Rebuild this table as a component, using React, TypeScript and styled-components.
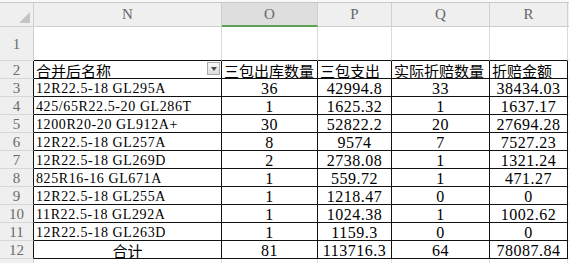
import styled, { createGlobalStyle } from "styled-components";

const GlobalStyle = createGlobalStyle`
  html, body {
    margin: 0;
    padding: 0;
    background: #ffffff;
    overflow: hidden;
  }
  body {
    font-family: "Liberation Serif", "Noto Sans CJK SC", serif;
    color: #000;
  }
`;

const TopStrip = styled.div`
  height: 2px;
  background: #f8f8f8;
  border-bottom: 1px solid #c8c8c8;
`;

const Grid = styled.div`
  display: grid;
  grid-template-columns: 34px 188px 96px 74px 98px 78px 10px;
  grid-template-rows: 24px 34px repeat(12, 18px);
`;

const Corner = styled.div`
  position: relative;
  background: #efefef;
  border-right: 1px solid #cfcfcf;
  border-bottom: 1px solid #cfcfcf;

  &::after {
    content: "";
    position: absolute;
    right: 3px;
    bottom: 3px;
    width: 11px;
    height: 11px;
    background: #c4c4c4;
    clip-path: polygon(100% 0, 100% 100%, 0 100%);
  }
`;

const ColHead = styled.div<{ $active?: boolean }>`
  display: flex;
  align-items: center;
  justify-content: center;
  box-sizing: border-box;
  background: ${(p) => (p.$active ? "#dedede" : "#efefef")};
  border-right: 1px solid #cfcfcf;
  border-bottom: ${(p) => (p.$active ? "2px solid #5d9f55" : "1px solid #cfcfcf")};
  color: #666;
  font-size: 15px;
  padding-top: ${(p) => (p.$active ? "1px" : "0")};
`;

const RowHead = styled.div<{ $dark?: boolean }>`
  display: flex;
  align-items: center;
  justify-content: center;
  box-sizing: border-box;
  background: #efefef;
  border-right: 1px solid ${(p) => (p.$dark ? "#111" : "#cfcfcf")};
  border-bottom: 1px solid #d6d6d6;
  color: #6a6a6a;
  font-size: 15px;
  padding-top: 2px;
`;

type Kind = "name" | "num" | "title" | "blank";

const Cell = styled.div<{
  $kind: Kind;
  $center?: boolean;
  $right: "dark" | "light";
  $bottom: "dark" | "light";
}>`
  position: relative;
  display: flex;
  align-items: center;
  justify-content: ${(p) => (p.$center ? "center" : "flex-start")};
  box-sizing: border-box;
  overflow: hidden;
  white-space: nowrap;
  padding-left: ${(p) => (p.$center ? "0" : "2px")};
  border-right: 1px solid ${(p) => (p.$right === "dark" ? "#111" : "#dadada")};
  border-bottom: 1px solid ${(p) => (p.$bottom === "dark" ? "#111" : "#dadada")};
  font-family: ${(p) =>
    p.$kind === "title"
      ? '"Noto Sans CJK SC", sans-serif'
      : '"Liberation Serif", "Noto Sans CJK SC", serif'};
  font-size: ${(p) =>
    p.$kind === "num" ? "16px" : p.$kind === "title" ? "15px" : "14px"};
  letter-spacing: ${(p) =>
    p.$kind === "num" ? "0.5px" : p.$kind === "name" ? "0.6px" : "0"};
  line-height: 17px;
  padding-top: 1px;
`;

const FilterButton = styled.span`
  position: absolute;
  right: 1px;
  top: 1px;
  width: 13px;
  height: 13px;
  box-sizing: border-box;
  border: 1px solid #a9a9a9;
  background: linear-gradient(#f7f7f7, #dcdcdc);
  display: flex;
  align-items: center;
  justify-content: center;

  &::after {
    content: "";
    border-left: 3px solid transparent;
    border-right: 3px solid transparent;
    border-top: 4px solid #4a4a4a;
    margin-top: 1px;
  }
`;

const columns = ["N", "O", "P", "Q", "R"];
const titles = ["合并后名称", "三包出库数量", "三包支出", "实际折赔数量", "折赔金额"];

const rows: string[][] = [
  ["12R22.5-18 GL295A", "36", "42994.8", "33", "38434.03"],
  ["425/65R22.5-20 GL286T", "1", "1625.32", "1", "1637.17"],
  ["1200R20-20 GL912A+", "30", "52822.2", "20", "27694.28"],
  ["12R22.5-18 GL257A", "8", "9574", "7", "7527.23"],
  ["12R22.5-18 GL269D", "2", "2738.08", "1", "1321.24"],
  ["825R16-16 GL671A", "1", "559.72", "1", "471.27"],
  ["12R22.5-18 GL255A", "1", "1218.47", "0", "0"],
  ["11R22.5-18 GL292A", "1", "1024.38", "1", "1002.62"],
  ["12R22.5-18 GL263D", "1", "1159.3", "0", "0"],
  ["合计", "81", "113716.3", "64", "78087.84"],
];

export default function App() {
  return (
    <>
      <GlobalStyle />
      <TopStrip />
      <Grid>
        <Corner />
        {columns.map((c) => (
          <ColHead key={c} $active={c === "O"}>
            {c}
          </ColHead>
        ))}
        <ColHead />

        <RowHead>1</RowHead>
        {columns.map((c) => (
          <Cell key={c} $kind="blank" $right="light" $bottom="dark" />
        ))}
        <Cell $kind="blank" $right="light" $bottom="light" />

        <RowHead $dark>2</RowHead>
        {titles.map((t, i) => (
          <Cell key={t} $kind="title" $right="dark" $bottom="dark">
            {t}
            {i === 0 && <FilterButton />}
          </Cell>
        ))}
        <Cell $kind="blank" $right="light" $bottom="light" />

        {rows.map((r, ri) => {
          const total = ri === rows.length - 1;
          return [
            <RowHead key={`h${ri}`} $dark>
              {ri + 3}
            </RowHead>,
            ...r.map((v, ci) => (
              <Cell
                key={`${ri}-${ci}`}
                $kind={ci === 0 && !total ? "name" : ci === 0 ? "title" : "num"}
                $center={ci > 0 || total}
                $right="dark"
                $bottom="dark"
              >
                {v}
              </Cell>
            )),
            <Cell key={`e${ri}`} $kind="blank" $right="light" $bottom="light" />,
          ];
        })}

        {/* row 13 is only a sliver at the bottom edge, its label is not visible */}
        <RowHead />
        {columns.map((c) => (
          <Cell key={c} $kind="blank" $right="light" $bottom="light" />
        ))}
        <Cell $kind="blank" $right="light" $bottom="light" />
      </Grid>
    </>
  );
}
